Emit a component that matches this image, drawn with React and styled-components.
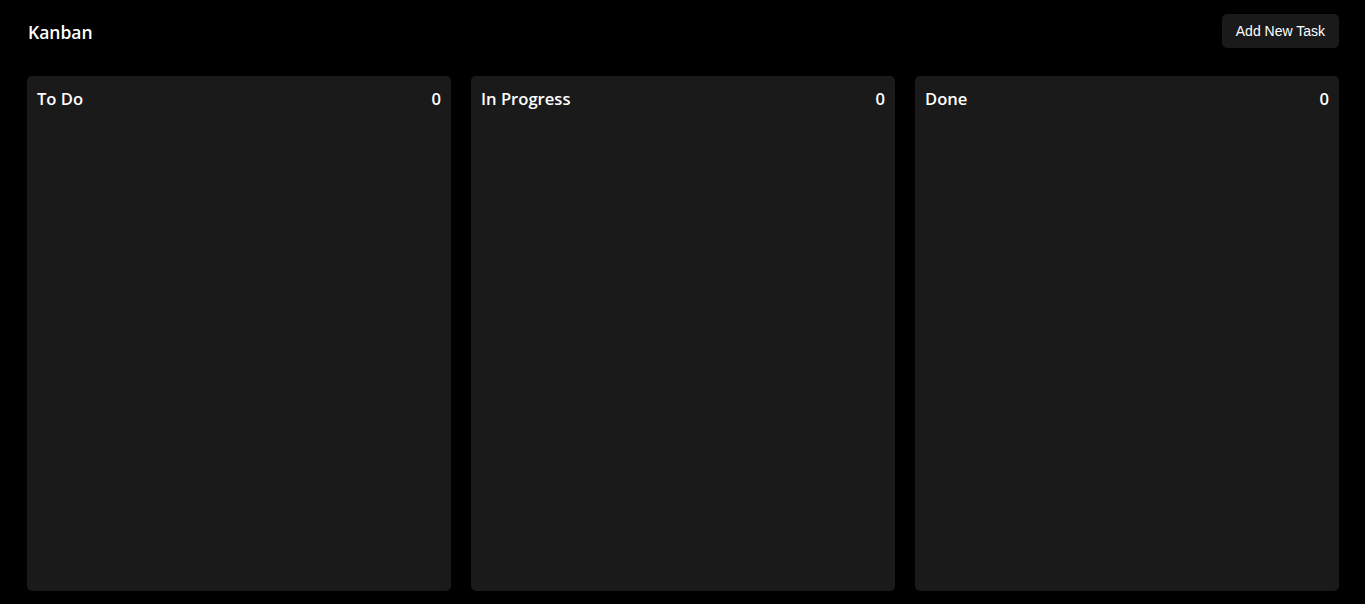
import React from "react";
import styled, { createGlobalStyle } from "styled-components";

const GlobalStyle = createGlobalStyle`
  html, body {
    margin: 0;
    padding: 0;
    background: #000;
    color: #fff;
    font-family: "Segoe UI", "Open Sans", "Noto Sans", sans-serif;
  }
  * { box-sizing: border-box; }
`;

const Page = styled.div`
  height: 100vh;
  display: flex;
  flex-direction: column;
  padding: 14px 26px 13px 27px;
`;

const Header = styled.header`
  display: flex;
  align-items: center;
  justify-content: space-between;
  height: 34px;
  margin-bottom: 28px;
`;

const Title = styled.h1`
  margin: 2px 0 0 1px;
  font-size: 17.5px;
  font-weight: 600;
  line-height: 22px;
`;

const AddButton = styled.button`
  height: 34px;
  padding: 0 14px;
  border: none;
  border-radius: 5px;
  background: #1a1a1a;
  color: #fff;
  font-family: "Liberation Sans", Arial, sans-serif;
  font-size: 14px;
  cursor: pointer;
`;

const Board = styled.main`
  flex: 1;
  display: grid;
  grid-template-columns: repeat(3, 1fr);
  gap: 20px;
`;

const Column = styled.section`
  background: #1a1a1a;
  border-radius: 5px;
  padding: 12px 10px 12px 10px;
`;

const ColumnHeader = styled.div`
  display: flex;
  justify-content: space-between;
  align-items: center;
  font-size: 16.6px;
  font-weight: 600;
  line-height: 22px;
`;

const columns = [
  { title: "To Do", count: 0 },
  { title: "In Progress", count: 0 },
  { title: "Done", count: 0 },
];

export default function App() {
  return (
    <>
      <GlobalStyle />
      <Page>
        <Header>
          <Title>Kanban</Title>
          <AddButton>Add New Task</AddButton>
        </Header>
        <Board>
          {columns.map((c) => (
            <Column key={c.title}>
              <ColumnHeader>
                <span>{c.title}</span>
                <span>{c.count}</span>
              </ColumnHeader>
            </Column>
          ))}
        </Board>
      </Page>
    </>
  );
}
